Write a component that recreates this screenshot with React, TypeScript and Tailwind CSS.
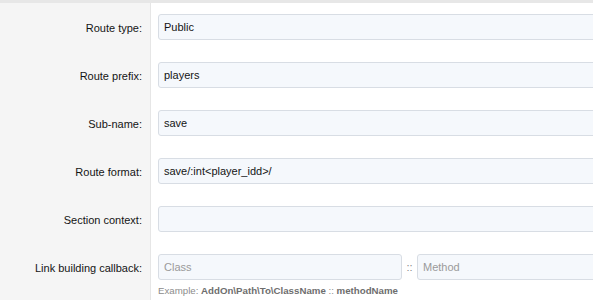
import React from "react";

const rows = [
  { label: "Route type:", value: "Public" },
  { label: "Route prefix:", value: "players" },
  { label: "Sub-name:", value: "save" },
  { label: "Route format:", value: "save/:int<player_idd>/" },
  { label: "Section context:", value: "" },
];

const inputCls =
  "h-[26px] rounded-[3px] border border-[#d8dde4] bg-[#f5f8fc] px-[5px] text-[11px] text-[#141414] outline-none placeholder:text-[#9a9a9a]";

const Row = ({ label, children }: { label: string; children: React.ReactNode }) => (
  <div className="flex">
    <div className="w-[151px] shrink-0 border-r border-[#e6e6e6] bg-[#f5f5f5] pr-[8px] pt-[17px] text-right text-[11px] text-[#141414]">
      {label}
    </div>
    <div className="min-w-0 flex-1 bg-white pl-[7px] pt-[11px] pb-[11px]">{children}</div>
  </div>
);

const App = () => {
  return (
    <div className="h-[300px] w-[593px] overflow-hidden bg-white font-['Liberation_Sans',Arial,sans-serif]">
      <div className="h-[3px] bg-[#e7e7e7]" />
      {rows.map((r) => (
        <Row key={r.label} label={r.label}>
          <input readOnly value={r.value} className={`${inputCls} block w-[calc(100%+20px)]`} />
        </Row>
      ))}
      <Row label="Link building callback:">
        <div className="flex items-center">
          <input placeholder="Class" className={`${inputCls} w-[244px] shrink-0`} />
          <span className="w-[15px] shrink-0 text-center text-[11px] text-[#8a8a8a]">::</span>
          <input placeholder="Method" className={`${inputCls} w-[200px] shrink-0`} />
        </div>
        <p className="mt-[4px] text-[9.7px] text-[#8c8c8c]">
          Example: <b className="text-[#6e6e6e]">AddOn\Path\To\ClassName</b> ::{" "}
          <b className="text-[#6e6e6e]">methodName</b>
        </p>
      </Row>
      <div className="flex h-full">
        <div className="w-[151px] border-r border-[#e6e6e6] bg-[#f5f5f5]" />
      </div>
    </div>
  );
};

export default App;
